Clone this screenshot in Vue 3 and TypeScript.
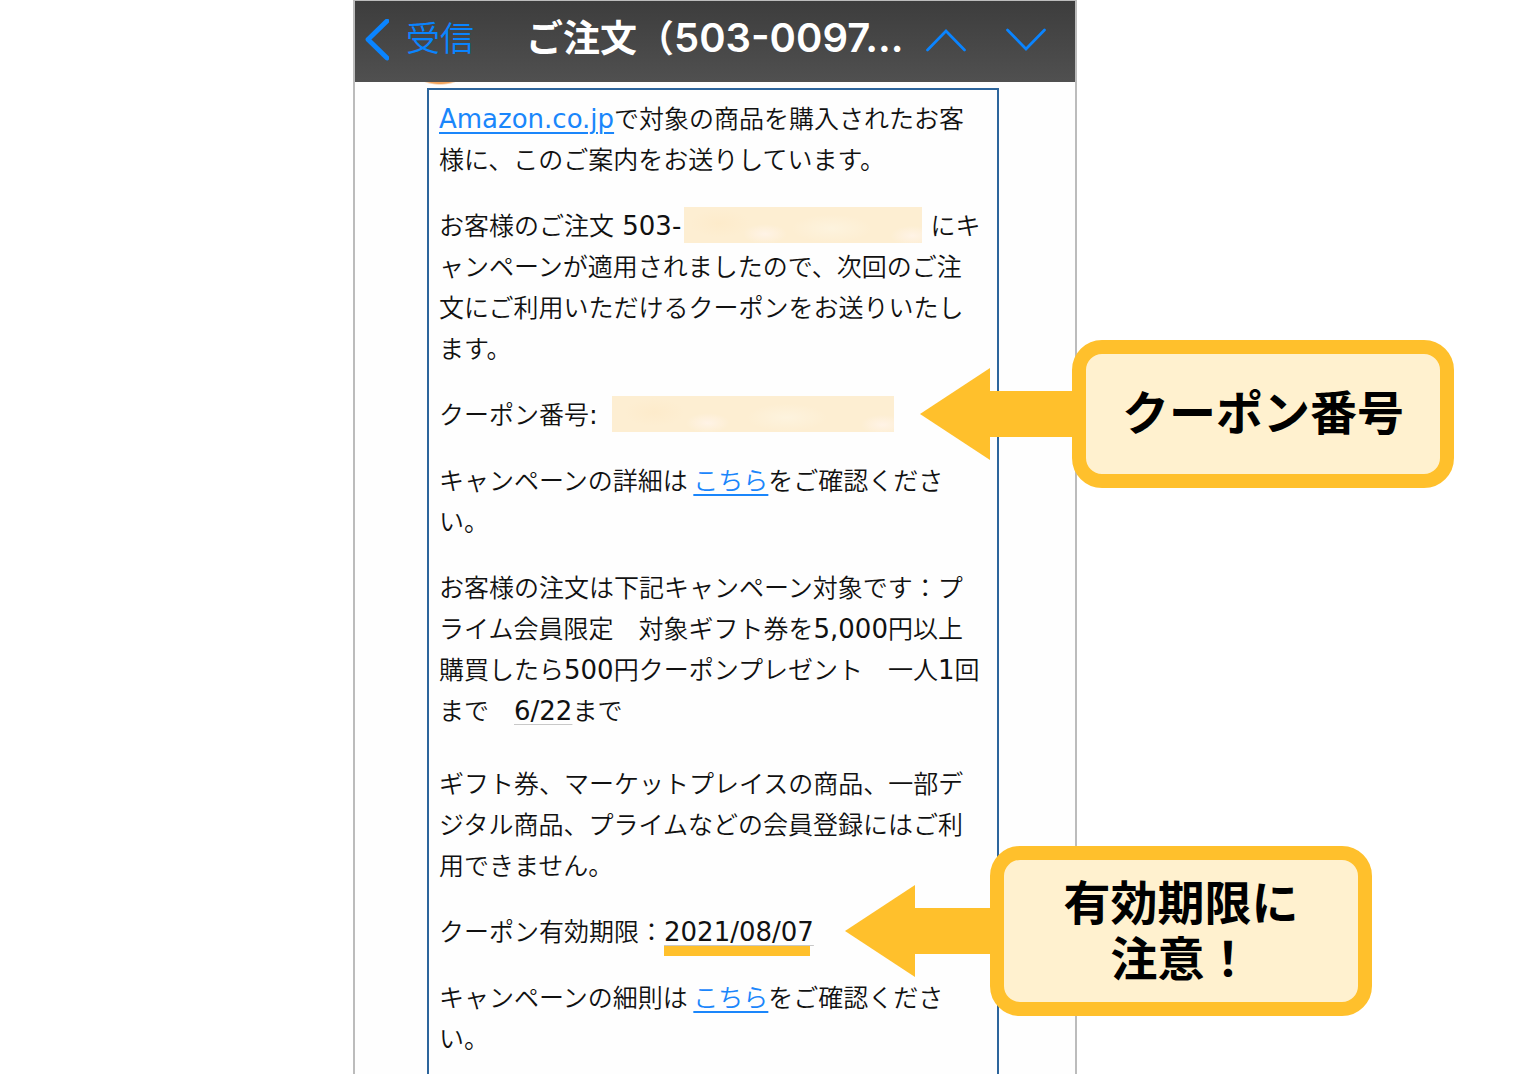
<script setup lang="ts">
const couponNumber: string = 'クーポン番号'
const expiry: string = '有効期限に\n注意！'
</script>

<template>
  <div class="page">
    <main class="phone">
      <header class="bar">
        <button class="back" type="button">
          <svg width="24" height="42" viewBox="0 0 24 42" fill="none" aria-hidden="true">
            <path d="M22 2 3 20.500l19 18.500" stroke="#0a84ff" stroke-width="4.800" stroke-linecap="round" stroke-linejoin="round" />
          </svg>
          <span>受信</span>
        </button>
        <h1 class="title">ご注文（<span class="digits">503-0097...</span></h1>
        <nav class="steps">
          <button type="button" aria-label="前のメール">
            <svg width="40" height="24" viewBox="0 0 40 24" fill="none">
              <path d="M1.500 22 20 3l18.500 19" stroke="#0a84ff" stroke-width="2.700" stroke-linecap="round" stroke-linejoin="miter" />
            </svg>
          </button>
          <button type="button" aria-label="次のメール">
            <svg width="40" height="24" viewBox="0 0 40 24" fill="none">
              <path d="M1.500 2 20 21 38.500 2" stroke="#0a84ff" stroke-width="2.700" stroke-linecap="round" stroke-linejoin="miter" />
            </svg>
          </button>
        </nav>
      </header>

      <div class="mail">
        <article class="letter">
          <p><a class="latin" href="#amazon">Amazon.co.jp</a>で対象の商品を購入されたお客<br />様に、このご案内をお送りしています。</p>
          <p>お客様のご注文<span class="latin"> 503-</span><span class="mask order"></span><span class="latin">&nbsp;</span>にキ<br />ャンペーンが適用されましたので、次回のご注<br />文にご利用いただけるクーポンをお送りいたし<br />ます。</p>
          <div class="row">
            <p>クーポン番号<span class="latin">: </span><span class="mask coupon"></span></p>
            <aside class="callout number">
              <svg class="head" width="70" height="92" viewBox="0 0 70 92" aria-hidden="true"><path d="M70 0v92L0 46z" fill="#ffc02c" /></svg>
              <span class="shaft"></span>
              <div class="bubble">{{ couponNumber }}</div>
            </aside>
          </div>
          <p>キャンペーンの詳細は <a href="#details">こちら</a>をご確認くださ<br />い。</p>
          <p class="campaign">お客様の注文は下記キャンペーン対象です：プ<br />ライム会員限定　対象ギフト券を<span class="latin">5,000</span>円以上<br />購買したら<span class="latin">500</span>円クーポンプレゼント　一人<span class="latin">1</span>回<br />まで　<span class="latin date">6/22</span>まで</p>
          <p>ギフト券、マーケットプレイスの商品、一部デ<br />ジタル商品、プライムなどの会員登録にはご利<br />用できません。</p>
          <div class="row">
            <p>クーポン有効期限：<span class="latin date marked">2021/08/07</span></p>
            <aside class="callout limit">
              <svg class="head" width="70" height="92" viewBox="0 0 70 92" aria-hidden="true"><path d="M70 0v92L0 46z" fill="#ffc02c" /></svg>
              <span class="shaft"></span>
              <div class="bubble">{{ expiry }}</div>
            </aside>
          </div>
          <p>キャンペーンの細則は <a href="#rules">こちら</a>をご確認くださ<br />い。</p>
        </article>
      </div>
    </main>
  </div>
</template>

<style>
body {
  background: #fff;
}
</style>

<style scoped>
.page {
  display: grid;
  grid-template-columns: 353fr 724fr 457fr;
  min-height: 100vh;
  overflow: hidden;
  font-family: "Noto Sans CJK JP", sans-serif;
}
.phone {
  grid-column: 2;
  display: flex;
  flex-direction: column;
  box-sizing: border-box;
  border: 2px solid #bcbcbc;
  border-width: 1px 2px 0;
  background: #fefefe;
}
.bar {
  display: flex;
  align-items: center;
  height: 81px;
  box-sizing: border-box;
  padding: 0 29px 4px 10px;
  background: linear-gradient(#3d3d3d, #505050);
}
button {
  margin: 0;
  padding: 0;
  border: 0;
  background: none;
  display: flex;
  align-items: center;
  cursor: pointer;
}
.back {
  gap: 17px;
  color: #0a84ff;
  font: 350 34px/48px "Noto Sans CJK JP", sans-serif;
}
.back span {
  padding-bottom: 5px;
}
.title {
  flex: 1;
  margin: 0 0 2px 52px;
  color: #fff;
  font: 600 37px/48px Inter, "Noto Sans CJK JP", sans-serif;
  white-space: nowrap;
}
.digits {
  font-size: 40px;
  line-height: 40px;
}
.steps {
  display: flex;
  gap: 40px;
}
.mail {
  flex: 1;
  display: flex;
  padding: 6px 76px 0 72px;
  background: radial-gradient(ellipse 18px 5px at 85px -2px, #f0a35c 70%, #fefefe) no-repeat;
}
.letter {
  flex: 1;
  min-width: 0;
  border: 2px solid #2d659c;
  border-bottom: 0;
  padding: 7px 10px 0;
  color: #111;
  font-size: 25px;
  font-weight: 350;
  line-height: 41px;
  white-space: nowrap;
}
p {
  margin: 0 0 25px;
}
.campaign {
  margin-bottom: 32px;
}
.latin {
  font-family: "DejaVu Sans", sans-serif;
  font-size: 26px;
  font-weight: 400;
  line-height: 26px;
}
a {
  color: #1a86fb;
  text-decoration: underline;
  text-decoration-thickness: 2px;
  text-underline-offset: 4px;
}
.mask {
  display: inline-block;
  height: 36px;
  margin-top: 3px;
  vertical-align: top;
  background:
    radial-gradient(ellipse 22px 10px at 34% 75%, #fff3e6, transparent),
    radial-gradient(ellipse 22px 10px at 96% 80%, #fff3e6, transparent),
    radial-gradient(ellipse 30px 14px at 15% 45%, #fdebcb, transparent),
    radial-gradient(ellipse 40px 14px at 62% 60%, #fdf3de, transparent),
    #fdeed2;
}
.order {
  width: 238px;
  margin-left: 3px;
}
.coupon {
  width: 282px;
  margin-left: 6px;
}
.date {
  position: relative;
  text-decoration: underline #c8c8c8 1px;
  text-underline-offset: 4px;
}
.marked::after {
  content: "";
  position: absolute;
  left: 0;
  right: 4px;
  bottom: -9px;
  height: 10px;
  background: #ffc02c;
}
.row {
  position: relative;
}
.callout {
  position: absolute;
  top: 50%;
  transform: translateY(-50%);
  display: flex;
  align-items: center;
}
.number {
  left: calc(100% - 67px);
}
.limit {
  left: calc(100% - 142px);
}
.head {
  display: block;
}
.shaft {
  width: 82px;
  height: 46px;
  background: #ffc02c;
}
.limit .shaft {
  width: 75px;
}
.bubble {
  box-sizing: border-box;
  width: 382px;
  padding: 28px 0 36px;
  border: 14px solid #ffc02c;
  border-radius: 30px;
  background: #fff1cf;
  color: #000;
  font: 700 47px/56px "Noto Sans CJK JP", sans-serif;
  text-align: center;
  white-space: pre-line;
}
.limit .bubble {
  padding: 12px 0 18px;
}
</style>
